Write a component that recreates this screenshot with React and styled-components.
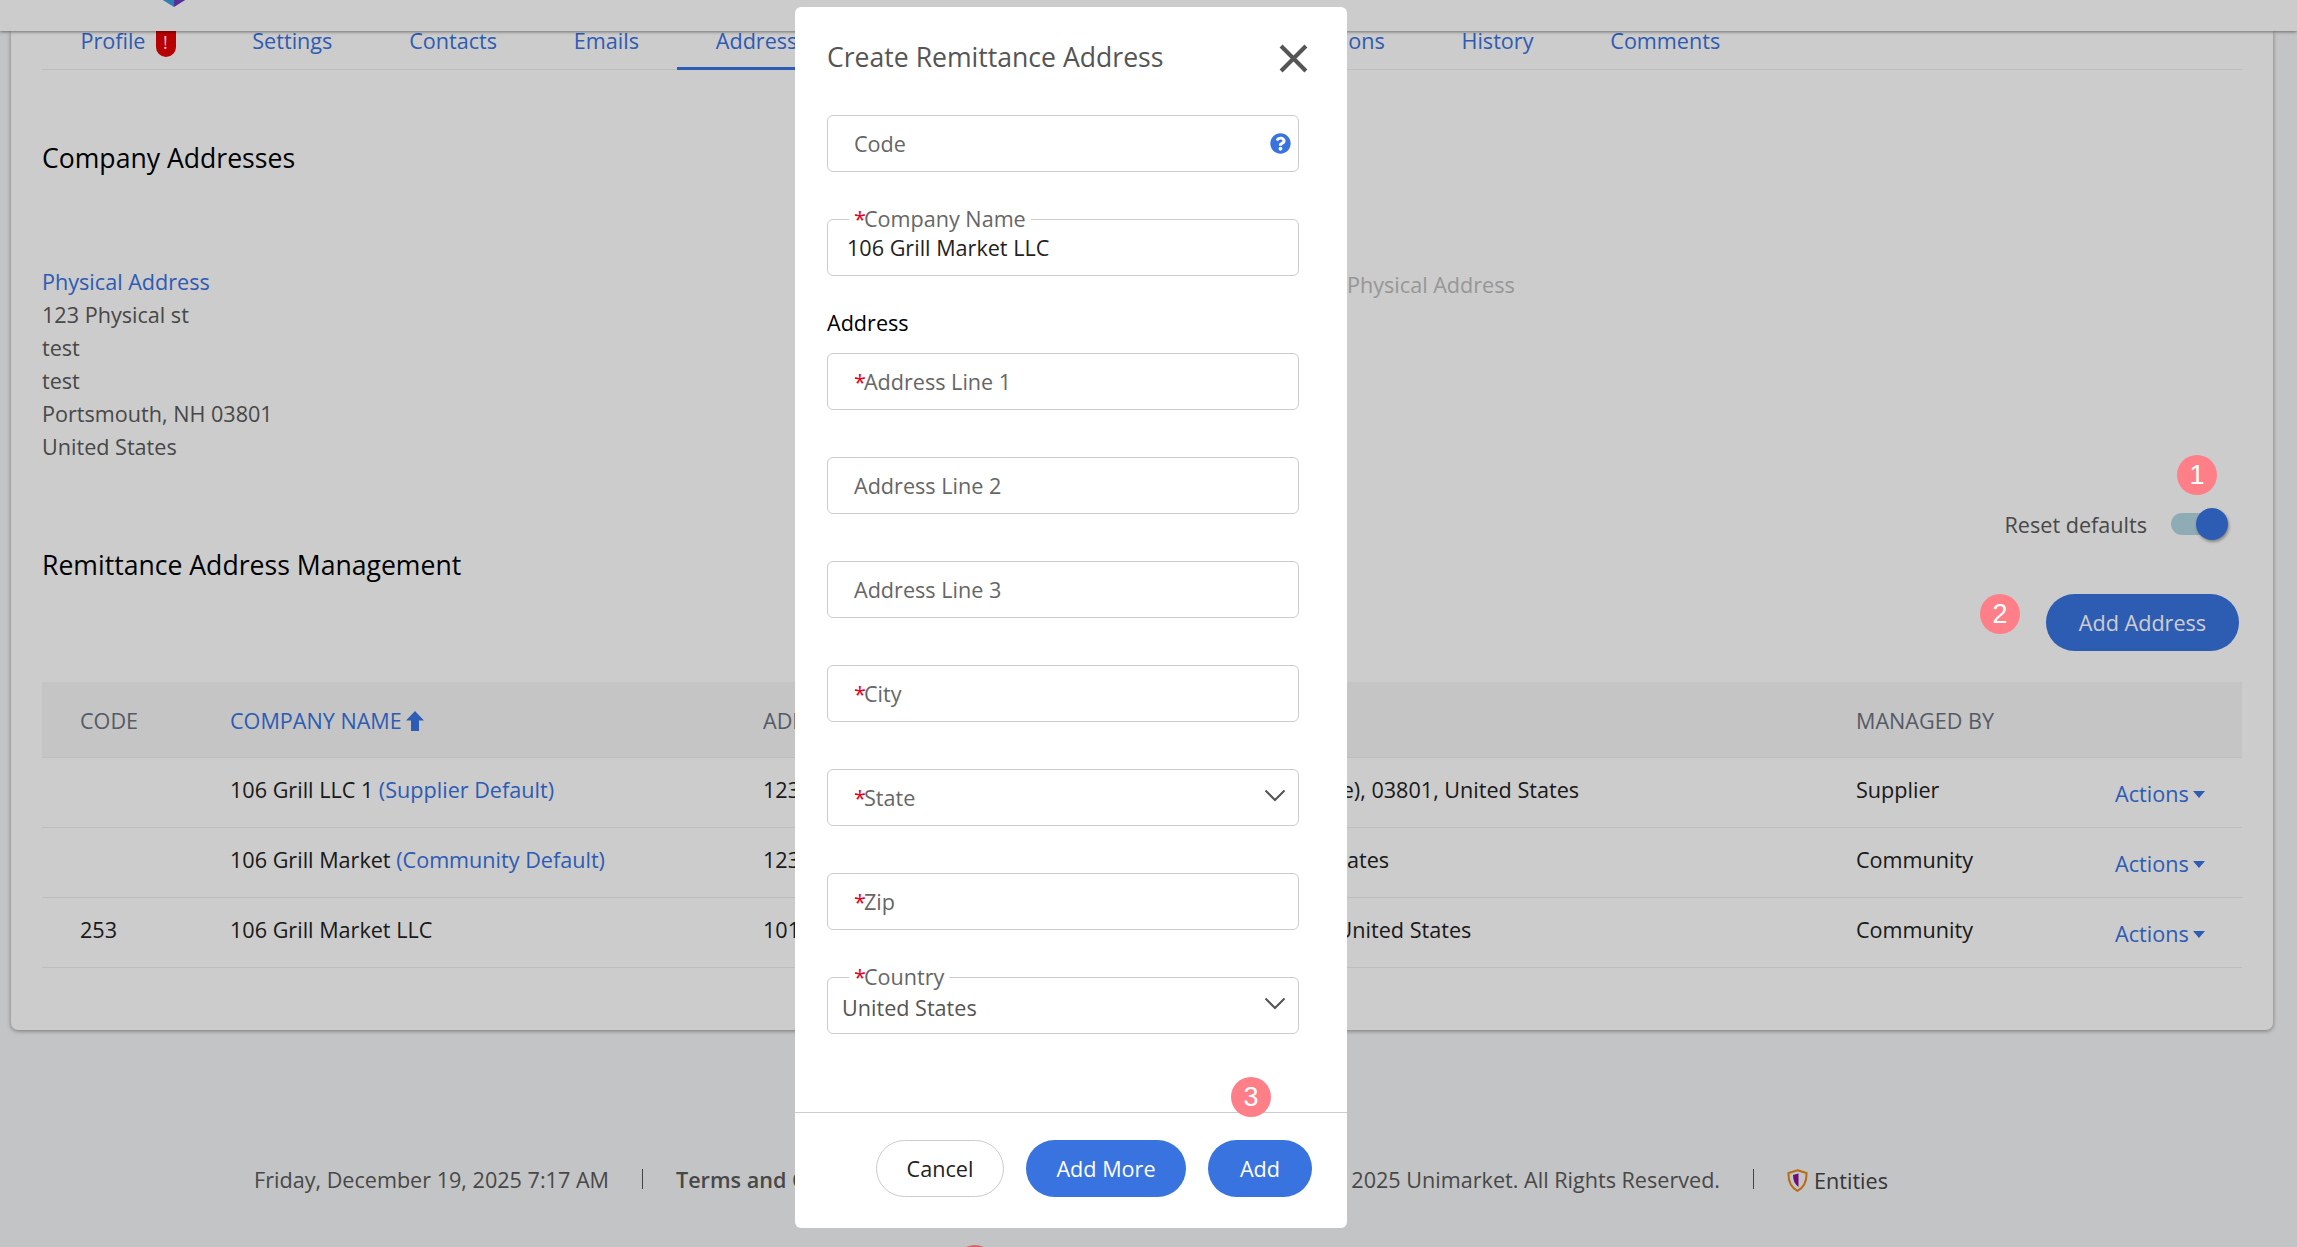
import styled, { createGlobalStyle } from "styled-components";
import { FaQuestionCircle } from "react-icons/fa";

const rows = [
  {
    code: "",
    name: "106 Grill LLC 1",
    tag: "(Supplier Default)",
    address: "123 Physical st, test, Portsmouth, New Hampshire (N. State), 03801, United States",
    managed: "Supplier",
  },
  {
    code: "",
    name: "106 Grill Market",
    tag: "(Community Default)",
    address: "123 Mains, Portsmouth, New Hampshire, 03801, United States",
    managed: "Community",
  },
  {
    code: "253",
    name: "106 Grill Market LLC",
    tag: "",
    address: "101 Market, Unit 4, Portsmouth, New Hampshire, 03801, United States",
    managed: "Community",
  },
];

const addressLines = ["123 Physical st", "test", "test", "Portsmouth, NH 03801", "United States"];

function Chevron() {
  return (
    <ChevronIcon viewBox="0 0 22 13">
      <polyline points="1.5,1.5 11,11 20.5,1.5" fill="none" stroke="#555" strokeWidth="2" />
    </ChevronIcon>
  );
}

function Required({ children }) {
  return (
    <>
      <Star>*</Star>
      {children}
    </>
  );
}

export default function App() {
  return (
    <Page>
      <GlobalStyle />
      <Header>
        <Logo viewBox="0 0 36 40">
          <polygon points="18,0 34,10 34,30 18,40" fill="#6d3bbf" />
          <polygon points="18,0 2,10 2,30 18,40" fill="#3b9fe0" />
        </Logo>
      </Header>

      <Main>
        <Card>
          <Tabs>
            <Tab>
              Profile
              <AlertPill>!</AlertPill>
            </Tab>
            <Tab>Settings</Tab>
            <Tab>Contacts</Tab>
            <Tab>Emails</Tab>
            <Tab $active>Addresses</Tab>
            <Tab $push={361}>Notifications</Tab>
            <Tab>History</Tab>
            <Tab>Comments</Tab>
          </Tabs>

          <SectionTitle $top={70}>Company Addresses</SectionTitle>

          <AddressColumns>
            <AddressBlock>
              <AddressLink>Physical Address</AddressLink>
              {addressLines.map((line, i) => (
                <AddressLine key={i}>{line}</AddressLine>
              ))}
            </AddressBlock>
            <GhostLabel>Physical Address</GhostLabel>
          </AddressColumns>

          <ManagementRow>
            <SectionTitle $top={43}>Remittance Address Management</SectionTitle>
            <Controls>
              <ResetRow>
                <ResetLabel>Reset defaults</ResetLabel>
                <Toggle>
                  <Thumb />
                </Toggle>
              </ResetRow>
              <AddAddressButton>Add Address</AddAddressButton>
            </Controls>
          </ManagementRow>

          <Table>
            <HeadRow>
              <HeadCell>CODE</HeadCell>
              <HeadCell $sorted>
                COMPANY NAME
                <SortArrow viewBox="0 0 18 20">
                  <polygon points="9,0 18,9.5 13,9.5 13,20 5,20 5,9.5 0,9.5" fill="currentColor" />
                </SortArrow>
              </HeadCell>
              <HeadCell>ADDRESS</HeadCell>
              <HeadCell>MANAGED BY</HeadCell>
              <HeadCell />
            </HeadRow>
            {rows.map((row) => (
              <BodyRow key={row.name}>
                <Cell>{row.code}</Cell>
                <Cell>
                  {row.name} {row.tag && <DefaultTag>{row.tag}</DefaultTag>}
                </Cell>
                <Cell>{row.address}</Cell>
                <Cell>{row.managed}</Cell>
                <ActionsCell>
                  Actions
                  <Caret />
                </ActionsCell>
              </BodyRow>
            ))}
          </Table>
        </Card>
      </Main>

      <Footer>
        <FooterGroup>
          <FooterText>Friday, December 19, 2025 7:17 AM</FooterText>
          <FooterSep />
          <FooterLink>Terms and Conditions</FooterLink>
          <FooterSep />
          <FooterLink>Privacy</FooterLink>
        </FooterGroup>
        <FooterGroup>
          <FooterText>© 2025 Unimarket. All Rights Reserved.</FooterText>
          <FooterSep />
          <EntitiesLink>
            <svg width="21" height="23" viewBox="0 0 21 23">
              <path d="M10.5 1.2 L19.5 4 C19.8 12 17 18.5 10.5 21.8 C4 18.5 1.2 12 1.5 4 Z" fill="#f4f5f7" stroke="#e8861a" strokeWidth="2" />
              <path d="M10.5 4.5 L5 6 C5 11.5 7 15.5 10.5 18 Z" fill="#8a0f96" transform="translate(1 0)" />
            </svg>
            Entities
          </EntitiesLink>
        </FooterGroup>
      </Footer>

      <Overlay />

      <Modal>
        <ModalHeader>
          <ModalTitle>Create Remittance Address</ModalTitle>
          <CloseIcon viewBox="0 0 28 28">
            <path d="M2 2 L26 26 M26 2 L2 26" stroke="#555" strokeWidth="4" fill="none" />
          </CloseIcon>
        </ModalHeader>

        <ModalBody>
          <Field>
            <Placeholder>Code</Placeholder>
            <HelpIcon>
              <FaQuestionCircle />
            </HelpIcon>
          </Field>
          <Field $filled $mb={32}>
            <FloatLabel>
              <Required>Company Name</Required>
            </FloatLabel>
            <Value>106 Grill Market LLC</Value>
          </Field>
          <GroupLabel>Address</GroupLabel>
          <Field>
            <Placeholder>
              <Required>Address Line 1</Required>
            </Placeholder>
          </Field>
          <Field>
            <Placeholder>Address Line 2</Placeholder>
          </Field>
          <Field>
            <Placeholder>Address Line 3</Placeholder>
          </Field>
          <Field>
            <Placeholder>
              <Required>City</Required>
            </Placeholder>
          </Field>
          <Field>
            <Placeholder>
              <Required>State</Required>
            </Placeholder>
            <Chevron />
          </Field>
          <Field>
            <Placeholder>
              <Required>Zip</Required>
            </Placeholder>
          </Field>
          <Field $select $mb={0}>
            <FloatLabel>
              <Required>Country</Required>
            </FloatLabel>
            <SelectValue>United States</SelectValue>
            <Chevron />
          </Field>
        </ModalBody>

        <ModalFooter>
          <CancelButton>Cancel</CancelButton>
          <PrimaryButton $width={160}>Add More</PrimaryButton>
          <PrimaryButton $width={104}>Add</PrimaryButton>
        </ModalFooter>
      </Modal>

      <StepBadge $x={2177} $y={455}>1</StepBadge>
      <StepBadge $x={1980} $y={594}>2</StepBadge>
      <StepBadge $x={1231} $y={1077}>3</StepBadge>
      <StepBadge $x={955} $y={1245} $dim />
    </Page>
  );
}

const GlobalStyle = createGlobalStyle`
  html, body {
    margin: 0;
    height: 100%;
    overflow: hidden;
    background: #f4f5f7;
  }
  * {
    box-sizing: border-box;
  }
  body {
    font-family: "Open Sans", "Lato", sans-serif;
    font-size: 21.6px;
    color: #222;
  }
`;

const Page = styled.div`
  position: relative;
  width: 2297px;
  height: 1247px;
  overflow: hidden;
`;

const Header = styled.header`
  position: relative;
  z-index: 2;
  height: 31px;
  background: #fff;
  box-shadow: 0 1px 3px rgba(0, 0, 0, 0.45);
  display: flex;
  align-items: flex-end;
  padding: 0 0 24px 156px;
`;

const Logo = styled.svg`
  width: 36px;
  height: 40px;
  flex: none;
`;

const Main = styled.main`
  padding: 0 24px 0 11px;
`;

const Card = styled.section`
  background: #fff;
  height: 999px;
  padding: 0 31px;
  border-radius: 0 0 7px 7px;
  box-shadow: 0 1px 4px rgba(0, 0, 0, 0.4);
`;

const Tabs = styled.nav`
  display: flex;
  height: 39px;
  border-bottom: 1px solid #eee;
`;

const Tab = styled.div`
  display: flex;
  align-items: flex-start;
  height: 39px;
  padding: 0 38.4px;
  margin-left: ${(p) => p.$push || 0}px;
  line-height: 20px;
  color: #3973e2;
  border-bottom: ${(p) => (p.$active ? "3px solid #3973e2" : "none")};
`;

const AlertPill = styled.span`
  width: 20px;
  height: 26px;
  margin-left: 10px;
  background: #e70000;
  color: #fff;
  font-size: 18px;
  line-height: 22px;
  text-align: center;
  border-radius: 0 0 10px 10px;
`;

const SectionTitle = styled.h2`
  margin: ${(p) => p.$top}px 0 0;
  font-size: 26.6px;
  line-height: 36px;
  font-weight: 400;
  color: #000;
`;

const AddressColumns = styled.div`
  display: grid;
  grid-template-columns: 1305px 1fr;
  margin-top: 89px;
`;

const AddressBlock = styled.div`
  display: flex;
  flex-direction: column;
`;

const AddressLink = styled.div`
  height: 33px;
  line-height: 33px;
  color: #3973e2;
`;

const AddressLine = styled.div`
  height: 33px;
  line-height: 33px;
  color: #5a5a5a;
`;

const GhostLabel = styled.div`
  line-height: 33px;
  margin-top: 3px;
  color: #bdbdbd;
`;

const ManagementRow = styled.div`
  display: flex;
  justify-content: space-between;
  align-items: flex-start;
  margin-top: 41px;
  padding-right: 3px;
`;

const Controls = styled.div`
  display: flex;
  flex-direction: column;
  align-items: flex-end;
`;

const ResetRow = styled.div`
  display: flex;
  align-items: center;
  gap: 24px;
  height: 40px;
  margin: 0 14px 50px 0;
`;

const ResetLabel = styled.span`
  color: #5a5a5a;
`;

const Toggle = styled.span`
  position: relative;
  display: block;
  width: 54px;
  height: 22px;
  border-radius: 11px;
  background: #b3d6e2;
`;

const Thumb = styled.span`
  position: absolute;
  right: -3px;
  top: -5px;
  width: 32px;
  height: 32px;
  border-radius: 50%;
  background: #3973e2;
  box-shadow: 1px 2px 3px rgba(0, 0, 0, 0.35);
`;

const AddAddressButton = styled.button`
  width: 193px;
  height: 57px;
  border: none;
  border-radius: 29px;
  background: #3973e0;
  color: #fff;
  font: inherit;
  font-weight: 500;
`;

const Table = styled.div`
  margin-top: 31px;
`;

const gridColumns = "188px 533px 1093px 259px 127px";

const HeadRow = styled.div`
  display: grid;
  grid-template-columns: ${gridColumns};
  height: 76px;
  padding-top: 2px;
  background: #f7f7f7;
  border-bottom: 1px solid #eee;
  align-items: center;
`;

const HeadCell = styled.div`
  display: flex;
  align-items: center;
  padding-left: 38px;
  color: ${(p) => (p.$sorted ? "#3973e2" : "#6b7280")};

  & + & {
    padding-left: 0;
  }
`;

const SortArrow = styled.svg`
  width: 18px;
  height: 20px;
  margin-left: 4px;
`;

const BodyRow = styled.div`
  display: grid;
  grid-template-columns: ${gridColumns};
  height: 70px;
  border-bottom: 1px solid #eee;
  align-items: center;
`;

const Cell = styled.div`
  padding: 0 0 6px 38px;
  white-space: nowrap;

  & + & {
    padding-left: 0;
  }
`;

const DefaultTag = styled.span`
  color: #3973e2;
`;

const ActionsCell = styled.div`
  display: flex;
  align-items: center;
  color: #3973e2;
  padding-top: 1px;
`;

const Caret = styled.span`
  width: 0;
  height: 0;
  margin: 3px 0 0 4px;
  border-left: 6px solid transparent;
  border-right: 6px solid transparent;
  border-top: 7px solid #3973e2;
`;

const Footer = styled.footer`
  display: flex;
  justify-content: space-between;
  align-items: center;
  margin-top: 131px;
  padding: 0 409px 0 254px;
  height: 36px;
  color: #5a5a5a;
`;

const FooterGroup = styled.div`
  display: flex;
  align-items: center;
  gap: 33px;
`;

const FooterText = styled.span`
  white-space: nowrap;
`;

const FooterLink = styled.span`
  white-space: nowrap;
  font-weight: 600;
`;

const FooterSep = styled.span`
  width: 1px;
  height: 20px;
  background: #555;
`;

const EntitiesLink = styled.span`
  display: flex;
  align-items: center;
  gap: 6px;
  margin-top: 3px;
  color: #444;
`;

const Overlay = styled.div`
  position: absolute;
  inset: 0;
  z-index: 5;
  background: rgba(0, 0, 0, 0.2);
`;

const Modal = styled.div`
  position: absolute;
  z-index: 6;
  left: 795px;
  top: 7px;
  width: 552px;
  height: 1221px;
  background: #fff;
  border-radius: 6px;
  display: flex;
  flex-direction: column;
`;

const ModalHeader = styled.div`
  height: 108px;
  flex: none;
  display: flex;
  justify-content: space-between;
  align-items: flex-start;
  padding: 34px 39px 0 32px;
`;

const ModalTitle = styled.h3`
  margin: 0;
  font-size: 26.6px;
  line-height: 32px;
  font-weight: 400;
  color: #555;
`;

const CloseIcon = styled.svg`
  width: 29px;
  height: 29px;
  margin-top: 3px;
`;

const ModalBody = styled.div`
  flex: 1;
  padding: 0 48px 0 32px;
`;

const Field = styled.div`
  position: relative;
  height: 57px;
  margin-bottom: ${(p) => (p.$mb === undefined ? 47 : p.$mb)}px;
  border: 1px solid #ccc;
  border-radius: 6px;
  display: flex;
  align-items: center;
  padding-left: ${(p) => (p.$filled ? 19 : p.$select ? 14 : 26)}px;
`;

const Placeholder = styled.span`
  color: #666;
`;

const Star = styled.span`
  color: #e8001c;
  margin-right: -2px;
`;

const Value = styled.span`
  color: #222;
`;

const SelectValue = styled.span`
  color: #555;
  padding-top: 4px;
`;

const FloatLabel = styled.span`
  position: absolute;
  left: 21px;
  top: -14px;
  padding: 0 5px;
  line-height: 26px;
  background: #fff;
  color: #666;
`;

const HelpIcon = styled.span`
  position: absolute;
  right: 7px;
  top: 17px;
  display: flex;
  color: #3973e0;
  font-size: 21px;
`;

const ChevronIcon = styled.svg`
  position: absolute;
  right: 12px;
  top: 19px;
  width: 22px;
  height: 13px;
`;

const GroupLabel = styled.div`
  height: 30px;
  margin-bottom: 15px;
  line-height: 30px;
  color: #000;
`;

const ModalFooter = styled.div`
  flex: none;
  height: 116px;
  border-top: 1px solid #ccc;
  display: flex;
  justify-content: flex-end;
  gap: 22px;
  padding: 27px 35px 0 0;
`;

const CancelButton = styled.button`
  width: 128px;
  height: 57px;
  border: 1px solid #ccc;
  border-radius: 29px;
  background: #fff;
  color: #222;
  font: inherit;
`;

const PrimaryButton = styled.button`
  width: ${(p) => p.$width}px;
  height: 57px;
  border: none;
  border-radius: 29px;
  background: #3973e0;
  color: #fff;
  font: inherit;
  font-weight: 500;
`;

const StepBadge = styled.span`
  position: absolute;
  z-index: 7;
  left: ${(p) => p.$x}px;
  top: ${(p) => p.$y}px;
  width: 40px;
  height: 40px;
  border-radius: 50%;
  background: ${(p) => (p.$dim ? "#d9606a" : "#ff7f88")};
  color: #fff;
  font-family: "Liberation Sans", sans-serif;
  font-size: 27px;
  line-height: 40px;
  text-align: center;
`;
